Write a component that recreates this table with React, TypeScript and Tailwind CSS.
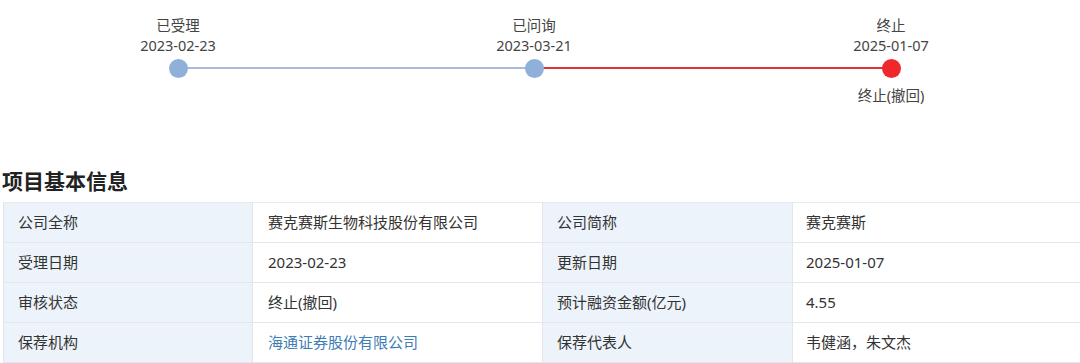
import React from "react";

const font = { fontFamily: '"Noto Sans", "Noto Sans CJK SC", sans-serif' };

function Node({ title, date, dot, sub }: { title: string; date: string; dot: string; sub?: string }) {
  return (
    <div className="flex w-[120px] shrink-0 flex-col items-center text-[14.5px] leading-[20px] text-[#444]">
      <div>{title}</div>
      <div>{date}</div>
      <div className={`relative z-10 mt-[4px] h-[19px] w-[19px] rounded-full ${dot}`} />
      {sub ? <div className="mt-[7px]">{sub}</div> : null}
    </div>
  );
}

const rows: [string, React.ReactNode, string, string][] = [
  ["公司全称", "赛克赛斯生物科技股份有限公司", "公司简称", "赛克赛斯"],
  ["受理日期", "2023-02-23", "更新日期", "2025-01-07"],
  ["审核状态", "终止(撤回)", "预计融资金额(亿元)", "4.55"],
  ["保荐机构", <span className="text-[#3d7db5]">海通证券股份有限公司</span>, "保荐代表人", "韦健涵，朱文杰"],
];

export default function App() {
  return (
    <div className="h-[363px] w-[1080px] overflow-hidden bg-white" style={font}>
      <div className="flex h-[160px] items-start pl-[118px] pt-[15px]">
        <Node title="已受理" date="2023-02-23" dot="bg-[#8fb0d9]" />
        <div className="mx-[-54px] mt-[52px] h-[2px] w-[344px] shrink-0 bg-[#a6bcd8]" />
        <Node title="已问询" date="2023-03-21" dot="bg-[#8fb0d9]" />
        <div className="mx-[-54px] mt-[52px] h-[2px] w-[345px] shrink-0 bg-[#d8373c]" />
        <Node title="终止" date="2025-01-07" dot="bg-[#f0282c]" sub="终止(撤回)" />
      </div>
      <div className="pl-[2px] text-[21px] font-bold leading-[42px] text-[#222]">项目基本信息</div>
      <div className="ml-[3px] grid grid-cols-[249px_290px_250px_1fr] border-t border-[#e6e9ee] text-[15px] text-[#333]">
        {rows.map((r, i) => (
          <React.Fragment key={i}>
            <div className="flex h-[40px] items-center border-b border-l border-[#e3e7ec] bg-[#edf3fb] pl-[14px]">{r[0]}</div>
            <div className="flex h-[40px] items-center border-b border-l border-[#e3e7ec] pl-[15px]">{r[1]}</div>
            <div className="flex h-[40px] items-center border-b border-l border-[#e3e7ec] bg-[#edf3fb] pl-[14px]">{r[2]}</div>
            <div className="flex h-[40px] items-center border-b border-l border-[#e3e7ec] pl-[13px]">{r[3]}</div>
          </React.Fragment>
        ))}
      </div>
    </div>
  );
}
